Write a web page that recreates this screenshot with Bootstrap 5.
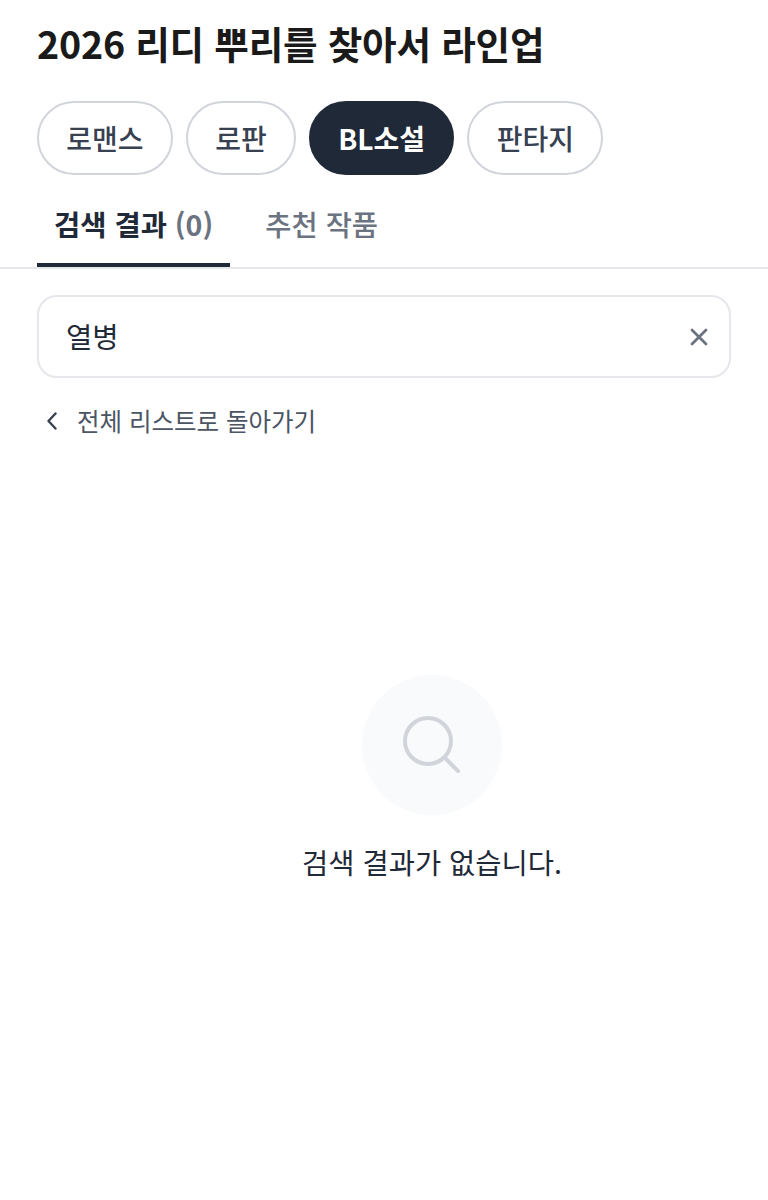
<!DOCTYPE html>
<html lang="ko">
<head>
    <meta charset="UTF-8">
    <meta name="viewport" content="width=device-width, initial-scale=1.0">
    <title>2026 리디 뿌리를 찾아서 라인업</title>
    <link href="https://cdn.jsdelivr.net/npm/bootstrap@5.3.3/dist/css/bootstrap.min.css" rel="stylesheet">
    <style>
        body {
            font-family: "Noto Sans CJK KR", "Noto Sans", sans-serif;
            background: #fff;
            overflow-x: hidden;
        }
        .page-wrap { padding: 20px 0 0 37px; min-height: 1200px; }
        .page-title { font-size: 37.6px; line-height: 46px; font-weight: 700; color: #1a1a1a; margin: 0 0 35px; letter-spacing: -.2px; }
        .genre-pill {
            height: 74px; padding: 0 27.3px; border: 2px solid #d1d5db; border-radius: 37px;
            background: #fff; color: #374151; font-size: 28px; font-weight: 500;
        }
        .genre-pill.on { background: #1f2937; border-color: #1f2937; color: #fff; font-weight: 700; }
        .tab-row { border-bottom: 2px solid #e5e7eb; margin-top: 13px; height: 81px; }
        .tab-item { padding: 0 17px; height: 79px; font-size: 28.5px; line-height: 71px; color: #6b7280; font-weight: 500; margin-right: 18px; }
        .tab-item.on { color: #1f2937; font-weight: 700; border-bottom: 4px solid #1f2937; }
        .tab-item.on span { color: #6b7280; font-weight: 600; }
        .search-box {
            width: 694px; height: 83px; margin-top: 26px; padding: 0 20px 0 27px;
            border: 2px solid #e5e7eb; border-radius: 20px; color: #1f2937; font-size: 28.6px;
        }
        .back-link { margin-top: 23px; height: 40px; color: #4b5563; font-size: 24.5px; gap: 20px; padding-left: 10px; }
        .empty-box { margin: 234px 0 0 59px; }
        .empty-circle { width: 140px; height: 140px; background: #f9fafb; }
        .empty-text { margin-top: 25px; font-size: 28.5px; line-height: 44px; color: #1f2937; }
    </style>
</head>
<body>

<div class="page-wrap">
    <h1 class="page-title">2026 리디 뿌리를 찾아서 라인업</h1>

    <div class="d-flex" style="gap: 13px">
        <button type="button" class="genre-pill">로맨스</button>
        <button type="button" class="genre-pill">로판</button>
        <button type="button" class="genre-pill on">BL소설</button>
        <button type="button" class="genre-pill">판타지</button>
    </div>

    <div class="tab-row d-flex" style="margin-left: -37px; padding-left: 37px">
        <div class="tab-item on">검색 결과 <span>(0)</span></div>
        <div class="tab-item">추천 작품</div>
    </div>

    <div class="search-box d-flex align-items-center justify-content-between">
        <span>열병</span>
        <svg width="20" height="20" viewBox="0 0 20 20" fill="none" stroke="#6b7280" stroke-width="2.8" stroke-linecap="round">
            <path d="M3 3l14 14M17 3L3 17"/>
        </svg>
    </div>

    <div class="back-link d-flex align-items-center">
        <svg width="10" height="18" viewBox="0 0 10 18" fill="none" stroke="#374151" stroke-width="2.4" stroke-linecap="round" stroke-linejoin="round">
            <path d="M8.5 1.5L1.5 9l7 7.5"/>
        </svg>
        <span>전체 리스트로 돌아가기</span>
    </div>

    <div class="empty-box d-flex flex-column align-items-center">
        <div class="empty-circle rounded-circle d-flex align-items-center justify-content-center">
            <svg width="60" height="60" viewBox="0 0 60 60" fill="none" stroke="#d1d5db" stroke-width="4" stroke-linecap="round">
                <circle cx="26" cy="26" r="23"/>
                <path d="M43 43l13 13"/>
            </svg>
        </div>
        <div class="empty-text">검색 결과가 없습니다.</div>
    </div>
</div>

<script src="https://cdn.jsdelivr.net/npm/bootstrap@5.3.3/dist/js/bootstrap.bundle.min.js"></script>
</body>
</html>
